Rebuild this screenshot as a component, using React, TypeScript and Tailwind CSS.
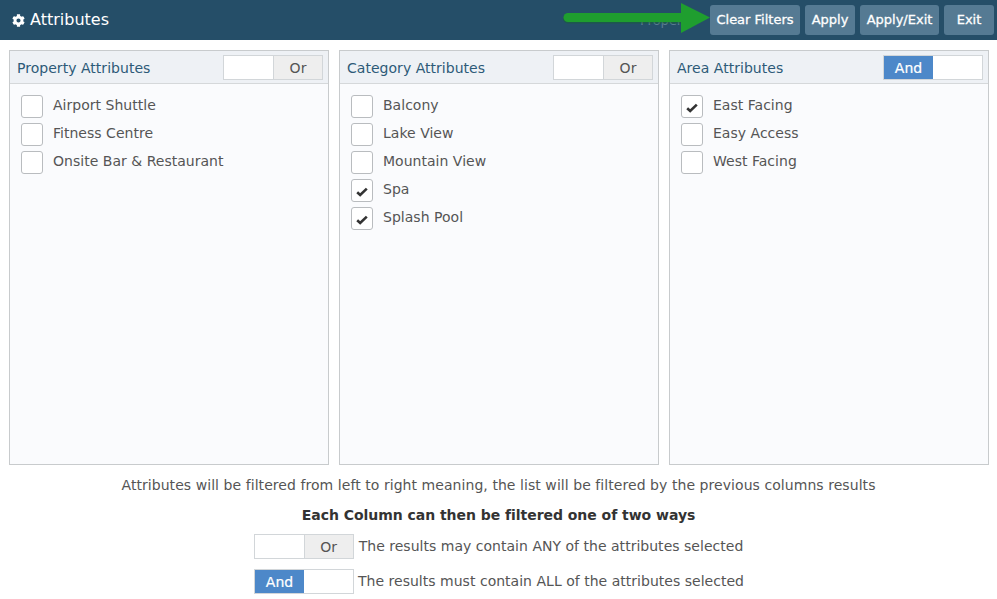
import { FaCog } from "react-icons/fa";

const font = "font-['DejaVu_Sans','Liberation_Sans',sans-serif]";

const Toggle = ({ mode }: { mode: "or" | "and" }) => (
  <div className="flex w-[100px] h-[25px] border border-[#d2d6d9] bg-white text-[14px] tracking-normal shrink-0">
    {mode === "and" ? (
      <>
        <div className="w-[49px] bg-[#4d88c9] text-white flex items-center justify-center pt-[2px] [-webkit-text-stroke:0.2px_white]">And</div>
        <div className="flex-1 bg-white" />
      </>
    ) : (
      <>
        <div className="w-[49px] bg-white" />
        <div className="flex-1 bg-[#eeeeee] border-l border-[#d2d6d9] text-[#555] flex items-center justify-center pt-[2px]">Or</div>
      </>
    )}
  </div>
);

const Check = () => (
  <svg width="12" height="10" viewBox="0 0 12 10" className="mt-[2px]">
    <path d="M1.2 5.2L4.2 8L10.8 1.6" fill="none" stroke="#333" strokeWidth="2.6" />
  </svg>
);

const Row = ({ label, checked }: { label: string; checked?: boolean }) => (
  <div className="flex items-center h-[28px]">
    <div className="mt-[3px] w-[22px] h-[23px] rounded-[3px] border border-[#b9bcbf] bg-white flex items-center justify-center shrink-0">
      {checked && <Check />}
    </div>
    <span className="ml-[10px] text-[14px] text-[#555] tracking-[0.02px]">{label}</span>
  </div>
);

const Panel = ({ title, mode, items }: { title: string; mode: "or" | "and"; items: [string, boolean?][] }) => (
  <div className="w-[320px] h-[415px] border border-[#c8cbcd] bg-[#fafbfd]">
    <div className="h-[33px] bg-[#eef1f5] border-b border-[#d5d8da] flex items-center justify-between pl-[7px] pr-[5px]">
      <span className="text-[14px] text-[#2d5a78] pt-[2px] tracking-[0.03px]">{title}</span>
      <Toggle mode={mode} />
    </div>
    <div className="pt-[7px] pl-[11px]">
      {items.map(([label, checked]) => (
        <Row key={label} label={label} checked={checked} />
      ))}
    </div>
  </div>
);

const HeaderButton = ({ label, width }: { label: string; width: string }) => (
  <button className={`${width} h-[30px] rounded-[3px] bg-[#557a93] text-white text-[13px] flex items-center justify-center [-webkit-text-stroke:0.3px_white]`}>
    {label}
  </button>
);

export default function App() {
  return (
    <div className={`w-[997px] h-[599px] bg-white overflow-hidden ${font}`}>
      {/* Top bar */}
      <div className="relative h-[40px] bg-[#254e68] flex items-center justify-between pl-[12px] pr-[3px]">
        <div className="flex items-center text-white text-[16px]">
          <FaCog className="w-[13px] h-[13px] mr-[5px]" />
          Attributes
        </div>
        <div className="flex items-center gap-[5px]">
          <HeaderButton label="Clear Filters" width="w-[90px]" />
          <HeaderButton label="Apply" width="w-[50px]" />
          <HeaderButton label="Apply/Exit" width="w-[79px]" />
          <HeaderButton label="Exit" width="w-[50px]" />
        </div>
        <span className="absolute left-[640px] top-[11px] text-[13px] text-[#5b7c92]">Property</span>
        {/* green annotation arrow */}
        <svg className="absolute left-[560px] top-0" width="152" height="36" viewBox="0 0 152 36">
          <path d="M8 17.5H123" stroke="#14692a" strokeOpacity="0.45" strokeWidth="10" strokeLinecap="round" transform="translate(0 1)" />
          <path d="M8 17.5H123" stroke="#1f9e2f" strokeWidth="9" strokeLinecap="round" />
          <path d="M121 3L150 17.5L121 33Z" fill="#1f9e2f" />
        </svg>
      </div>

      {/* Columns */}
      <div className="flex gap-[10px] pt-[10px] pl-[9px]">
        <Panel
          title="Property Attributes"
          mode="or"
          items={[["Airport Shuttle"], ["Fitness Centre"], ["Onsite Bar & Restaurant"]]}
        />
        <Panel
          title="Category Attributes"
          mode="or"
          items={[["Balcony"], ["Lake View"], ["Mountain View"], ["Spa", true], ["Splash Pool", true]]}
        />
        <Panel
          title="Area Attributes"
          mode="and"
          items={[["East Facing", true], ["Easy Access"], ["West Facing"]]}
        />
      </div>

      {/* Legend */}
      <div className="flex flex-col items-center text-[14px] text-[#555]">
        <p className="mt-[12px] h-[17px] leading-[17px] tracking-[0.06px]">
          Attributes will be filtered from left to right meaning, the list will be filtered by the previous columns results
        </p>
        <p className="mt-[13px] h-[17px] leading-[17px] font-bold text-[#333] tracking-[-0.04px]">Each Column can then be filtered one of two ways</p>
        <div className="mt-[10px] flex items-center gap-[5px] tracking-[0.02px]">
          <Toggle mode="or" />
          <span>The results may contain ANY of the attributes selected</span>
        </div>
        <div className="mt-[10px] ml-[1px] flex items-center gap-[4px] tracking-[0.02px]">
          <Toggle mode="and" />
          <span>The results must contain ALL of the attributes selected</span>
        </div>
      </div>
    </div>
  );
}
